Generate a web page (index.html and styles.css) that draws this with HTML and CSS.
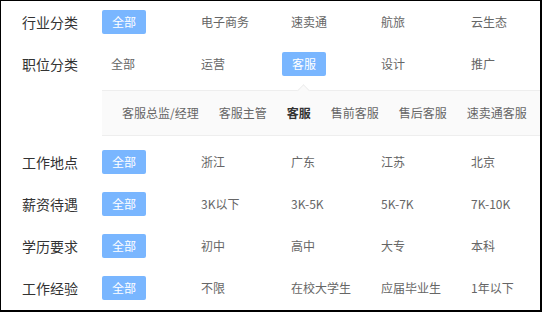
FILE: index.html
```html
<!DOCTYPE html>
<html lang="zh-CN">
<head>
  <meta charset="UTF-8">
  <title>职位筛选</title>
  <link rel="stylesheet" href="styles.css">
</head>
<body>
  <div class="filter">
    <div class="row">
      <div class="label">行业分类</div>
      <div class="items">
        <span class="item active">全部</span>
        <span class="item">电子商务</span>
        <span class="item">速卖通</span>
        <span class="item">航旅</span>
        <span class="item">云生态</span>
      </div>
    </div>
    <div class="row">
      <div class="label">职位分类</div>
      <div class="items">
        <span class="item">全部</span>
        <span class="item">运营</span>
        <span class="item active">客服</span>
        <span class="item">设计</span>
        <span class="item">推广</span>
      </div>
    </div>
    <div class="sub">
      <span class="arrow"></span>
      <span class="sub-item">客服总监/经理</span>
      <span class="sub-item">客服主管</span>
      <span class="sub-item current">客服</span>
      <span class="sub-item">售前客服</span>
      <span class="sub-item">售后客服</span>
      <span class="sub-item">速卖通客服</span>
    </div>
    <div class="row">
      <div class="label">工作地点</div>
      <div class="items">
        <span class="item active">全部</span>
        <span class="item">浙江</span>
        <span class="item">广东</span>
        <span class="item">江苏</span>
        <span class="item">北京</span>
      </div>
    </div>
    <div class="row">
      <div class="label">薪资待遇</div>
      <div class="items">
        <span class="item active">全部</span>
        <span class="item">3K以下</span>
        <span class="item">3K-5K</span>
        <span class="item">5K-7K</span>
        <span class="item">7K-10K</span>
      </div>
    </div>
    <div class="row">
      <div class="label">学历要求</div>
      <div class="items">
        <span class="item active">全部</span>
        <span class="item">初中</span>
        <span class="item">高中</span>
        <span class="item">大专</span>
        <span class="item">本科</span>
      </div>
    </div>
    <div class="row">
      <div class="label">工作经验</div>
      <div class="items">
        <span class="item active">全部</span>
        <span class="item">不限</span>
        <span class="item">在校大学生</span>
        <span class="item">应届毕业生</span>
        <span class="item">1年以下</span>
      </div>
    </div>
  </div>
</body>
</html>
```

FILE: styles.css
```css
*{
  margin: 0;
  padding: 0;
  box-sizing: border-box;
}
body{
  font-family: "Noto Sans CJK SC", "Noto Sans", sans-serif;
  background: #fff;
}
.filter{
  width: 542px;
  height: 312px;
  border: 1px solid #000;
  border-right-width: 2px;
  border-bottom-width: 2px;
  overflow: hidden;
}
.row{
  display: flex;
  align-items: center;
  height: 42px;
}
.label{
  flex-shrink: 0;
  width: 101px;
  padding-left: 21px;
  font-size: 14px;
  color: #333;
}
.items{
  display: flex;
  flex-shrink: 0;
}
.item{
  flex-shrink: 0;
  width: 90px;
  padding: 0 9px;
  height: 24px;
  line-height: 24px;
  font-size: 12px;
  color: #666;
  white-space: nowrap;
}
.item.active{
  width: 44px;
  margin-right: 46px;
  padding: 0 10px;
  background: #79b6ff;
  color: #fff;
  border-radius: 2px;
}
.sub{
  position: relative;
  display: flex;
  margin: 5px 0 5px 101px;
  padding: 0 10px;
  height: 46px;
  background: #fafafa;
  border-top: 1px solid #eee;
  border-bottom: 1px solid #eee;
}
.sub-item{
  flex-shrink: 0;
  padding: 0 10px;
  line-height: 44px;
  font-size: 12px;
  color: #666;
  white-space: nowrap;
}
.sub-item.current{
  color: #333;
  font-weight: bold;
}
.arrow{
  position: absolute;
  top: -5px;
  left: 197px;
  width: 9px;
  height: 9px;
  background: #fafafa;
  border-top: 1px solid #eee;
  border-left: 1px solid #eee;
  transform: rotate(45deg);
}
```
